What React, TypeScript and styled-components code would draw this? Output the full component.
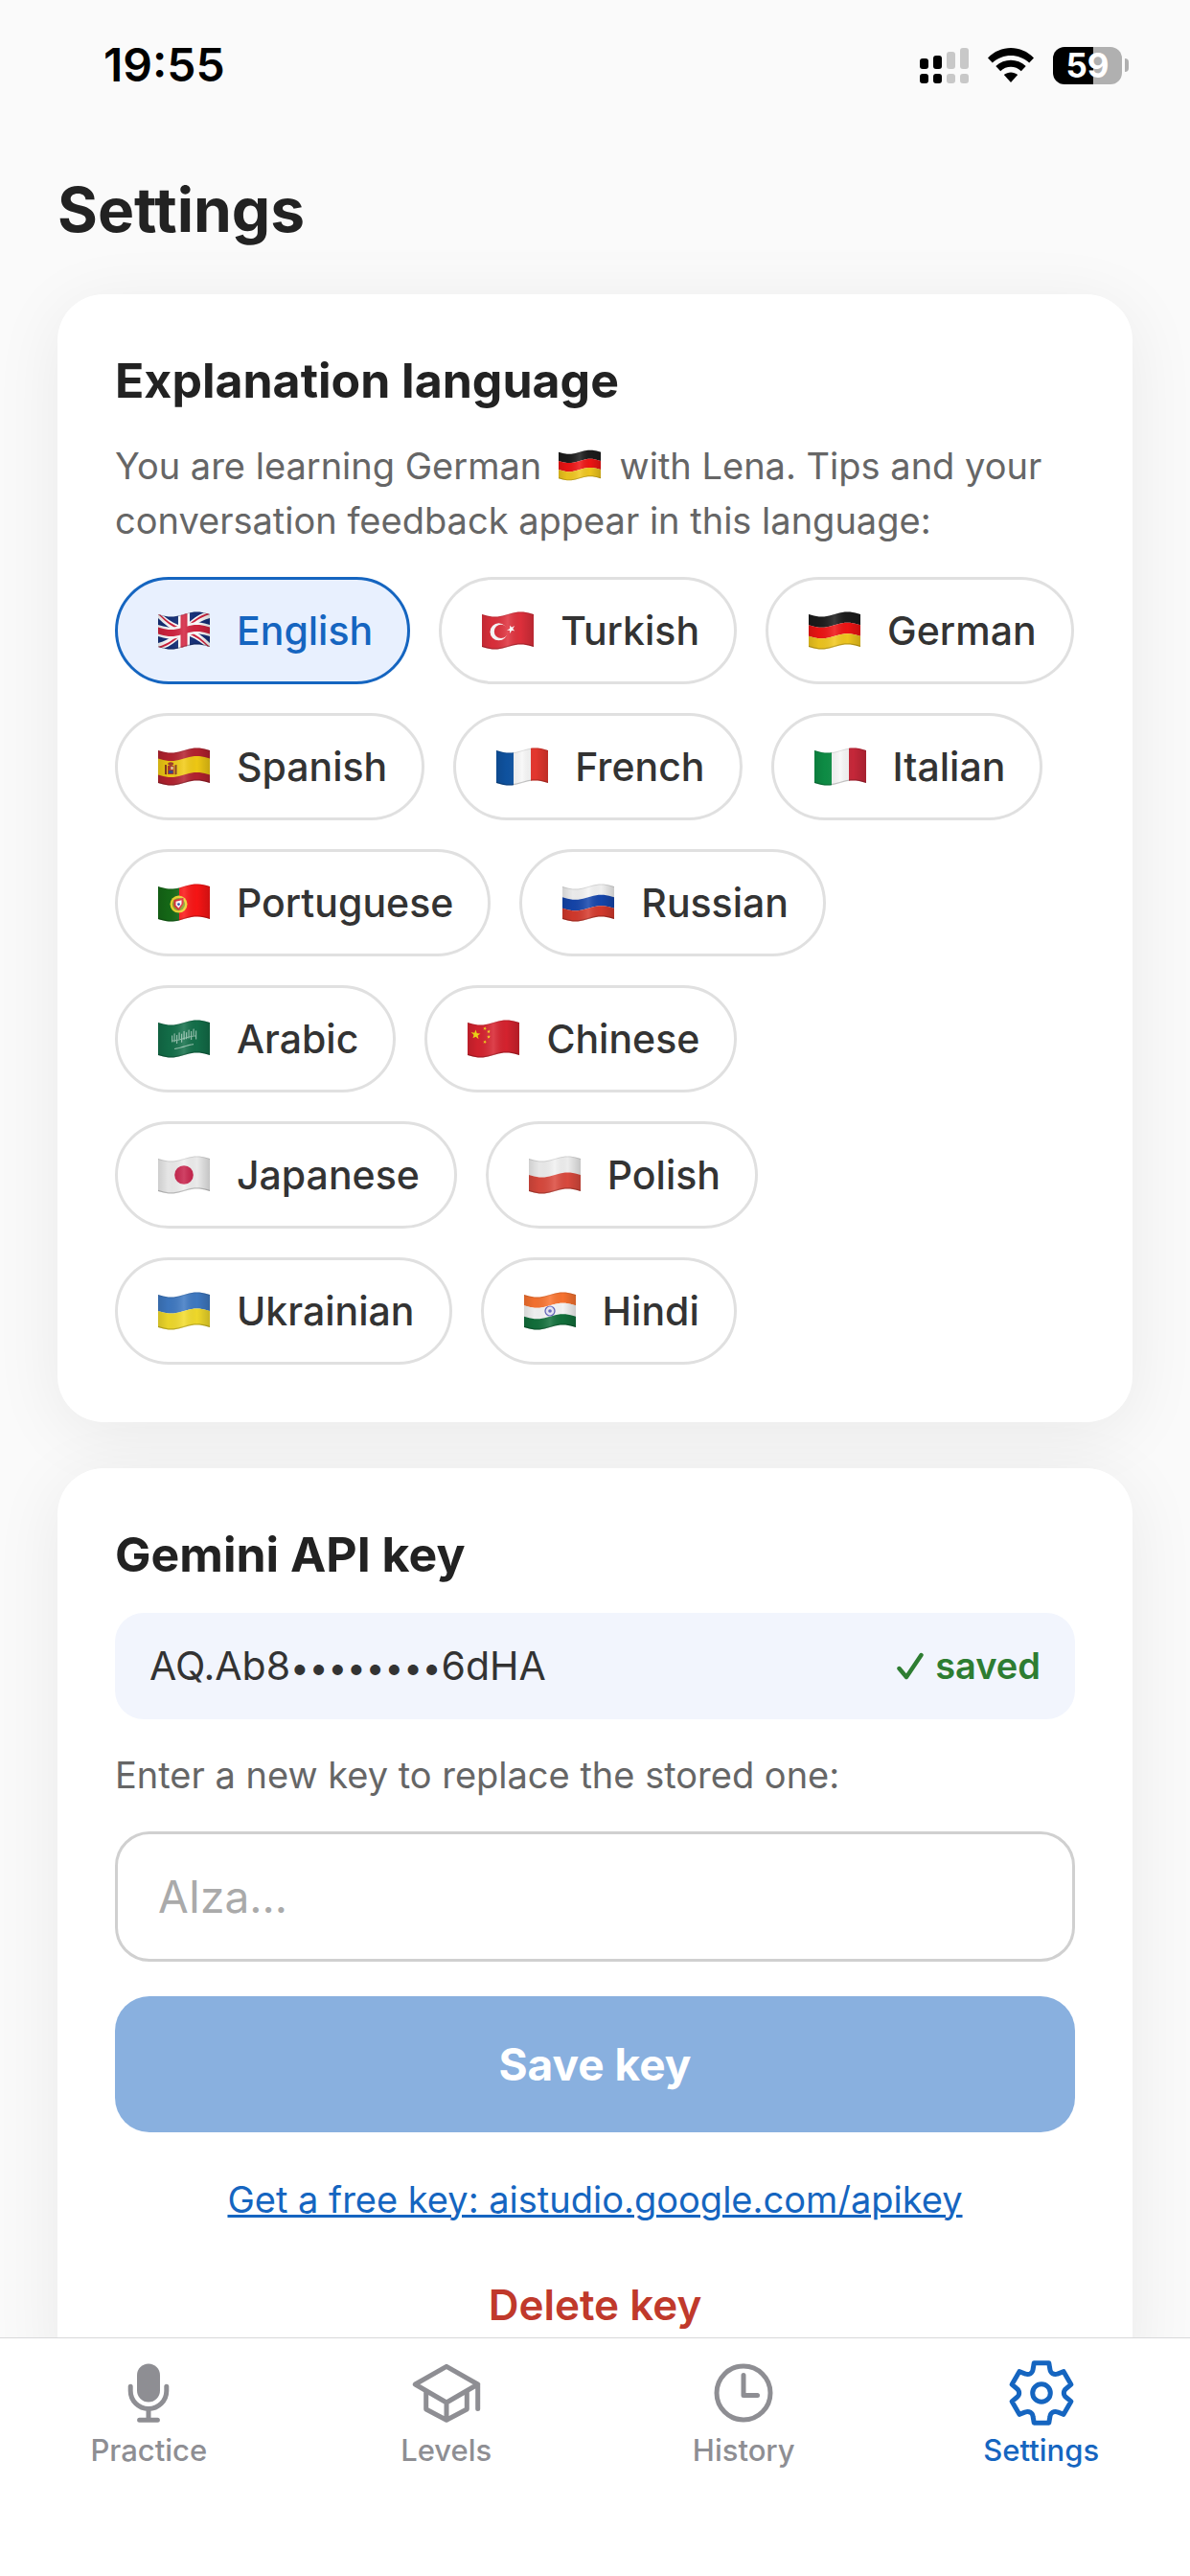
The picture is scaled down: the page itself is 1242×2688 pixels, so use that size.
import React, { useState } from "react";
import styled, { createGlobalStyle } from "styled-components";

const GlobalStyle = createGlobalStyle`
  *, *::before, *::after { box-sizing: border-box; }
  body { margin: 0; background: #fafafa; }
  button, input { font-family: inherit; margin: 0; }
  h1, h2, p { margin: 0; }
`;

/* ---------- flags ---------- */

const FLAG_W = 54;
const FLAG_H = 34;

type Point = [number, number];
type Shape =
  | { kind: "poly"; fill: string; points: Point[] }
  | { kind: "oval"; fill: string; cx: number; cy: number; rx: number; ry: number };

// Every flag is defined flat on a 54 x 34 field, then bent along this curve.
const lift = (x: number) => 3 + 2.6 * Math.sin((2 * Math.PI * x) / FLAG_W);

const wavy = (points: Point[]) => {
  const steps = 10;
  const out: string[] = [];
  points.forEach(([x1, y1], i) => {
    const [x2, y2] = points[(i + 1) % points.length];
    for (let s = 0; s < steps; s++) {
      const x = x1 + ((x2 - x1) * s) / steps;
      const y = y1 + ((y2 - y1) * s) / steps;
      out.push(`${x.toFixed(2)},${(y + lift(x)).toFixed(2)}`);
    }
  });
  return `M${out.join("L")}Z`;
};

const poly = (fill: string, ...points: Point[]): Shape => ({ kind: "poly", fill, points });
const rect = (fill: string, x: number, y: number, w: number, h: number): Shape =>
  poly(fill, [x, y], [x + w, y], [x + w, y + h], [x, y + h]);
const oval = (fill: string, cx: number, cy: number, rx: number, ry = rx): Shape => ({
  kind: "oval", fill, cx, cy, rx, ry,
});
const star = (fill: string, cx: number, cy: number, r: number, turn = 0): Shape =>
  poly(
    fill,
    ...Array.from({ length: 10 }, (_, i): Point => {
      const a = turn + (Math.PI * i) / 5 - Math.PI / 2;
      const d = i % 2 ? r * 0.4 : r;
      return [cx + d * Math.cos(a), cy + d * Math.sin(a)];
    })
  );
const rows = (...fills: string[]) =>
  fills.map((f, i) => rect(f, 0, (FLAG_H / fills.length) * i, FLAG_W, FLAG_H / fills.length));
const columns = (...fills: string[]) =>
  fills.map((f, i) => rect(f, (FLAG_W / fills.length) * i, 0, FLAG_W / fills.length, FLAG_H));

const FLAGS: Record<string, Shape[]> = {
  gb: [
    rect("#15307a", 0, 0, 54, 34),
    poly("#fff", [0, 0], [6, 0], [54, 30], [54, 34], [48, 34], [0, 4]),
    poly("#fff", [54, 0], [48, 0], [0, 30], [0, 34], [6, 34], [54, 4]),
    poly("#d3233f", [0, 0], [3, 0], [25, 14], [21, 14]),
    poly("#d3233f", [54, 34], [51, 34], [29, 20], [33, 20]),
    poly("#d3233f", [54, 0], [51, 0], [29, 14], [33, 14]),
    poly("#d3233f", [0, 34], [3, 34], [25, 20], [21, 20]),
    rect("#fff", 21, 0, 12, 34),
    rect("#fff", 0, 11, 54, 12),
    rect("#d3233f", 23.5, 0, 7, 34),
    rect("#d3233f", 0, 13.5, 54, 7),
  ],
  tr: [
    rect("#e0303c", 0, 0, 54, 34),
    oval("#fff", 17.5, 16, 9),
    oval("#e0303c", 20, 16, 7.2),
    star("#fff", 30.5, 16.5, 4.4, -0.3),
  ],
  de: rows("#1c1c1c", "#f01414", "#f2c81e"),
  es: [
    rect("#b5222f", 0, 0, 54, 34),
    rect("#f2cb14", 0, 8.5, 54, 17),
    rect("#8a3a22", 7, 13, 2, 10),
    rect("#8a3a22", 17.5, 13, 2, 10),
    rect("#b3392c", 10, 13.5, 6.5, 9),
    rect("#e8cfa0", 13.3, 14.5, 2.4, 3),
    rect("#3d4a86", 11, 18.5, 4.5, 3),
    oval("#a5402c", 13.2, 11.5, 3, 1.8),
  ],
  fr: columns("#0f55a5", "#f7f7f7", "#e8382f"),
  it: columns("#0e9147", "#f7f7f7", "#c9283a"),
  pt: [
    rect("#156b17", 0, 0, 22, 34),
    rect("#fb1515", 22, 0, 32, 34),
    oval("#efd62c", 21.5, 17, 9),
    oval("#8aa02b", 21.5, 17, 6.6),
    poly("#e02a33", [16.5, 11.5], [26.5, 11.5], [26.5, 18], [21.5, 23.5], [16.5, 18]),
    poly("#fff", [18.5, 13.5], [24.5, 13.5], [24.5, 17.5], [21.5, 21], [18.5, 17.5]),
    oval("#2c48a8", 21.5, 17, 1.4),
  ],
  ru: rows("#f4f4f4", "#1546ad", "#d63a2d"),
  sa: [
    rect("#13704a", 0, 0, 54, 34),
    ...[14, 16.5, 19, 21.5, 24, 26.5, 29, 31.5, 34, 36.5, 39].map((x, i) =>
      rect("#8fbfaa", x, i % 2 ? 9 : 11, 1.2, i % 3 ? 9 : 7)
    ),
    rect("#8fbfaa", 14, 16, 26, 1),
    rect("#8fbfaa", 17, 24.5, 20, 1.2),
  ],
  cn: [
    rect("#d8232f", 0, 0, 54, 34),
    star("#f7e017", 8.5, 10.5, 5.2),
    star("#f7e017", 18, 4, 2, 0.4),
    star("#f7e017", 22, 8, 2, 0.2),
    star("#f7e017", 22, 13.5, 2),
    star("#f7e017", 18, 18, 2, 0.4),
  ],
  jp: [rect("#efefef", 0, 0, 54, 34), oval("#c8234c", 27, 17, 9.8)],
  pl: rows("#f1f1f1", "#dc4a3e"),
  ua: rows("#3f7ac4", "#f3dc2b"),
  in: [
    ...rows("#fb7430", "#f8f8f8", "#12713c"),
    oval("#5457b5", 27, 17, 5.6),
    oval("#e4e4f4", 27, 17, 4.4),
    oval("#5457b5", 27, 17, 1.8),
  ],
};

const FlagSvg = styled.svg<{ $inline?: boolean }>`
  display: ${(p) => (p.$inline ? "inline-block" : "block")};
  flex: none;
  width: ${(p) => (p.$inline ? 44 : 54)}px;
  height: ${(p) => (p.$inline ? 33 : 40)}px;
  margin: ${(p) => (p.$inline ? "0 9px 0 7px" : "0")};
  vertical-align: ${(p) => (p.$inline ? "-2px" : "baseline")};
`;

const outline: Point[] = [[0, 0], [FLAG_W, 0], [FLAG_W, FLAG_H], [0, FLAG_H]];

function Flag({ code, inline }: { code: string; inline?: boolean }) {
  const shade = `shade-${code}${inline ? "-inline" : ""}`;
  return (
    <FlagSvg viewBox="0 0 54 40" $inline={inline} aria-hidden="true">
      <defs>
        <linearGradient id={shade} x1="0" x2="1" y1="0" y2="0">
          <stop offset="0" stopColor="#000" stopOpacity="0.14" />
          <stop offset="0.2" stopColor="#000" stopOpacity="0.04" />
          <stop offset="0.5" stopColor="#fff" stopOpacity="0.14" />
          <stop offset="0.75" stopColor="#000" stopOpacity="0.02" />
          <stop offset="1" stopColor="#000" stopOpacity="0.18" />
        </linearGradient>
      </defs>
      {FLAGS[code].map((s, i) =>
        s.kind === "poly" ? (
          <path key={i} d={wavy(s.points)} fill={s.fill} />
        ) : (
          <ellipse key={i} cx={s.cx} cy={s.cy + lift(s.cx)} rx={s.rx} ry={s.ry} fill={s.fill} />
        )
      )}
      <path d={wavy(outline)} fill={`url(#${shade})`} />
      <path d={wavy([[0, 32.8], [54, 32.8], [54, 34], [0, 34]])} fill="#000" opacity="0.2" />
      <path d={wavy([[0, 0], [54, 0], [54, 1], [0, 1]])} fill="#000" opacity="0.1" />
    </FlagSvg>
  );
}

/* ---------- shell ---------- */

const Shell = styled.div`
  display: flex;
  flex-direction: column;
  height: 100vh;
  background: #fafafa;
  color: #222;
  font-family: Inter, "Liberation Sans", sans-serif;
`;

const Scroller = styled.main`
  flex: 1;
  min-height: 0;
  overflow-x: hidden;
  overflow-y: auto;
  scrollbar-width: none;
  display: flex;
  flex-direction: column;
  gap: 48px;
  padding: 47px 60px 60px;
`;

const StatusBar = styled.header`
  flex: none;
  display: flex;
  align-items: center;
  justify-content: space-between;
  height: 132px;
  padding: 4px 64px 0 108px;
`;

const Clock = styled.time`
  color: #000;
  font-size: 48px;
  font-weight: 600;
  line-height: 60px;
`;

const StatusIcons = styled.div`
  display: flex;
  align-items: center;
  gap: 20px;
`;

const Battery = styled.div`
  display: flex;
  align-items: center;
  gap: 3px;
`;

const BatteryBody = styled.span<{ $level: number }>`
  display: flex;
  align-items: center;
  justify-content: center;
  width: 72px;
  height: 39px;
  border-radius: 12px;
  background: linear-gradient(to right, #000 ${(p) => p.$level}%, #b0b0b0 ${(p) => p.$level}%);
  color: #fff;
  font-size: 35px;
  font-weight: 700;
  line-height: 39px;
`;

const BatteryNub = styled.span`
  width: 4px;
  height: 14px;
  border-radius: 0 4px 4px 0;
  background: #b0b0b0;
`;

/* ---------- cards ---------- */

const PageTitle = styled.h1`
  flex: none;
  font-size: 64px;
  font-weight: 700;
  line-height: 80px;
`;

const Card = styled.section`
  flex: none;
  display: flex;
  flex-direction: column;
  gap: 30px;
  padding: 60px;
  border-radius: 48px;
  background: #fff;
  box-shadow: 0 12px 72px rgba(0, 0, 0, 0.07);
`;

const CardTitle = styled.h2`
  font-size: 50px;
  font-weight: 700;
  line-height: 61px;
`;

const Hint = styled.p`
  color: #666;
  font-size: 38px;
  line-height: 57px;
`;

const FieldLabel = styled(Hint).attrs({ as: "label" })<{ htmlFor?: string }>``;

const Chips = styled.div`
  display: flex;
  flex-wrap: wrap;
  gap: 30px;
`;

const Chip = styled.button<{ $on: boolean }>`
  display: flex;
  align-items: center;
  gap: 28px;
  padding: 27px 36px 27px 42px;
  border: 3px solid ${(p) => (p.$on ? "#1565c0" : "#e0e0e0")};
  border-radius: 56px;
  background: ${(p) => (p.$on ? "#e8f0fe" : "#fff")};
  color: ${(p) => (p.$on ? "#1565c0" : "#333")};
  font-size: 41px;
  font-weight: 500;
  line-height: 52px;
  cursor: pointer;
`;

const StoredKey = styled.div`
  display: flex;
  align-items: center;
  justify-content: space-between;
  padding: 27px 36px;
  border-radius: 30px;
  background: #f2f5fd;
  color: #333;
  font-size: 41px;
  line-height: 57px;
`;

const Mask = styled.span`
  font-size: 35px;
  line-height: 1;
`;

const Saved = styled.span`
  display: flex;
  align-items: center;
  gap: 12px;
  color: #2e7d32;
  font-size: 38px;
  font-weight: 600;
`;

const KeyForm = styled.form`
  display: flex;
  flex-direction: column;
  gap: 36px;
`;

const KeyInput = styled.input`
  width: 100%;
  height: 136px;
  padding: 0 42px;
  border: 3px solid #d0d0d0;
  border-radius: 36px;
  background: #fff;
  color: #222;
  font-size: 46px;
  outline: none;
  &::placeholder { color: #aaa; opacity: 1; }
`;

const SaveButton = styled.button`
  padding: 42px;
  border: 0;
  border-radius: 36px;
  background: #89b0df;
  color: #fff;
  font-size: 46px;
  font-weight: 700;
  line-height: 58px;
`;

const KeyActions = styled.div`
  display: flex;
  flex-direction: column;
  align-items: center;
  gap: 53px;
  padding-top: 12px;
`;

const KeyLink = styled.a`
  color: #1565c0;
  font-size: 38px;
  line-height: 57px;
  text-decoration: underline;
  text-decoration-thickness: 3px;
`;

const DeleteButton = styled.button`
  padding: 0;
  border: 0;
  background: none;
  color: #c0392b;
  font-size: 44px;
  font-weight: 600;
  line-height: 57px;
  cursor: pointer;
`;

/* ---------- tab bar ---------- */

const TabBar = styled.nav`
  flex: none;
  display: grid;
  grid-template-columns: repeat(4, 1fr);
  padding: 18px 0 98px;
  border-top: 1px solid #d8d8da;
  background: #fff;
`;

const Tab = styled.button<{ $on: boolean }>`
  display: flex;
  flex-direction: column;
  align-items: center;
  gap: 3px;
  padding: 0 0 15px;
  border: 0;
  background: none;
  color: ${(p) => (p.$on ? "#1565c0" : "#8e8e93")};
  font-size: 31px;
  font-weight: 500;
  line-height: 36px;
  cursor: pointer;
`;

const TabIcon = styled.svg`
  display: block;
  width: 78px;
  height: 78px;
  fill: none;
  stroke: currentColor;
  stroke-width: 5;
  stroke-linecap: round;
  stroke-linejoin: round;
`;

const gearPath = (() => {
  const outlinePoints: string[] = [];
  for (let k = 0; k < 6; k++) {
    const a = (k * Math.PI) / 3;
    const at = (x: number, y: number) =>
      `${(x * Math.cos(a) - y * Math.sin(a)).toFixed(2)} ${(x * Math.sin(a) + y * Math.cos(a)).toFixed(2)}`;
    outlinePoints.push(
      `${k ? "" : `M${at(-11.65, -20.2)}`}Q${at(-9.3, -21.6)} ${at(-8.9, -24.5)}L${at(-7.8, -31.2)}L${at(7.8, -31.2)}L${at(8.9, -24.5)}Q${at(9.3, -21.6)} ${at(11.65, -20.2)}`
    );
  }
  return outlinePoints.join("") + "Z";
})();

const TAB_ICONS: Record<string, React.ReactNode> = {
  Practice: (
    <>
      <rect x="-12" y="-30.5" width="24" height="40" rx="12" fill="currentColor" stroke="none" />
      <path d="M-18.8 -6.8V-2.3A18.8 18.8 0 0 0 18.8 -2.3V-6.8M0 17V28M-9.4 28.3H9.4" />
    </>
  ),
  Levels: (
    <path d="M0 -27.7L32.7 -9L0 10L-32.7 -9ZM-21.3 -2V17L0 28.3L21.3 17V-2M0 10V28.3M32.7 -9V16.5" />
  ),
  History: (
    <>
      <circle r="28" />
      <path d="M0 -18.5V2.5H14.5" />
    </>
  ),
  Settings: (
    <>
      <circle r="9.3" />
      <path d={gearPath} />
    </>
  ),
};

const LANGUAGES: [string, string][] = [
  ["gb", "English"], ["tr", "Turkish"], ["de", "German"], ["es", "Spanish"], ["fr", "French"],
  ["it", "Italian"], ["pt", "Portuguese"], ["ru", "Russian"], ["sa", "Arabic"], ["cn", "Chinese"],
  ["jp", "Japanese"], ["pl", "Polish"], ["ua", "Ukrainian"], ["in", "Hindi"],
];

const TABS = ["Practice", "Levels", "History", "Settings"];

function SignalIcon() {
  const bars = [11, 8, 4, 0];
  return (
    <svg width="51" height="37" viewBox="0 0 51 37" aria-hidden="true">
      {bars.map((top, i) => (
        <g key={i} fill={i < 2 ? "#000" : "#c8c8c8"}>
          <rect x={i * 14} y={top} width="9" height={22 - top} rx="3" />
          <rect x={i * 14} y="27" width="9" height="10" rx="3" />
        </g>
      ))}
    </svg>
  );
}

function WifiIcon() {
  return (
    <svg width="48" height="36" viewBox="0 0 48 36" aria-hidden="true">
      <path d="M0 10.5C13 -3.5 35 -3.5 48 10.5L43.2 15.5C32.5 5.5 15.5 5.5 4.8 15.5Z" />
      <path d="M8.3 19C17.2 10.5 30.8 10.5 39.7 19L34.8 24.2C28.6 18.4 19.4 18.4 13.2 24.2Z" />
      <path d="M16.8 28C21 24.6 27 24.6 31.2 28L24 36Z" />
    </svg>
  );
}

export default function App() {
  const [language, setLanguage] = useState("English");
  const [tab, setTab] = useState("Settings");
  const [draft, setDraft] = useState("");

  return (
    <>
      <GlobalStyle />
      <Shell>
        <StatusBar>
          <Clock>19:55</Clock>
          <StatusIcons>
            <SignalIcon />
            <WifiIcon />
            <Battery>
              <BatteryBody $level={59}>59</BatteryBody>
              <BatteryNub />
            </Battery>
          </StatusIcons>
        </StatusBar>

        <Scroller>
          <PageTitle>Settings</PageTitle>

          <Card>
            <CardTitle>Explanation language</CardTitle>
            <Hint>
              You are learning German <Flag code="de" inline /> with Lena. Tips and your
              conversation feedback appear in this language:
            </Hint>
            <Chips>
              {LANGUAGES.map(([code, name]) => (
                <Chip
                  key={code}
                  type="button"
                  $on={name === language}
                  aria-pressed={name === language}
                  onClick={() => setLanguage(name)}
                >
                  <Flag code={code} />
                  {name}
                </Chip>
              ))}
            </Chips>
          </Card>

          <Card>
            <CardTitle>Gemini API key</CardTitle>
            <StoredKey>
              <span>
                AQ.Ab8<Mask>••••••••</Mask>6dHA
              </span>
              <Saved>
                <svg width="28" height="30" viewBox="0 0 28 30" fill="none" aria-hidden="true">
                  <path d="M2.5 17L10 26L25.5 3" stroke="currentColor" strokeWidth="4.4" strokeLinecap="round" strokeLinejoin="round" />
                </svg>
                saved
              </Saved>
            </StoredKey>
            <FieldLabel htmlFor="api-key">Enter a new key to replace the stored one:</FieldLabel>
            <KeyForm onSubmit={(e) => e.preventDefault()}>
              <KeyInput
                id="api-key"
                placeholder="AIza..."
                value={draft}
                onChange={(e) => setDraft(e.target.value)}
              />
              <SaveButton type="submit">Save key</SaveButton>
            </KeyForm>
            <KeyActions>
              <KeyLink href="#apikey">Get a free key: aistudio.google.com/apikey</KeyLink>
              <DeleteButton type="button">Delete key</DeleteButton>
            </KeyActions>
          </Card>
        </Scroller>

        <TabBar>
          {TABS.map((name) => (
            <Tab key={name} type="button" $on={name === tab} onClick={() => setTab(name)}>
              <TabIcon viewBox="-39 -39 78 78" aria-hidden="true">
                {TAB_ICONS[name]}
              </TabIcon>
              {name}
            </Tab>
          ))}
        </TabBar>
      </Shell>
    </>
  );
}
